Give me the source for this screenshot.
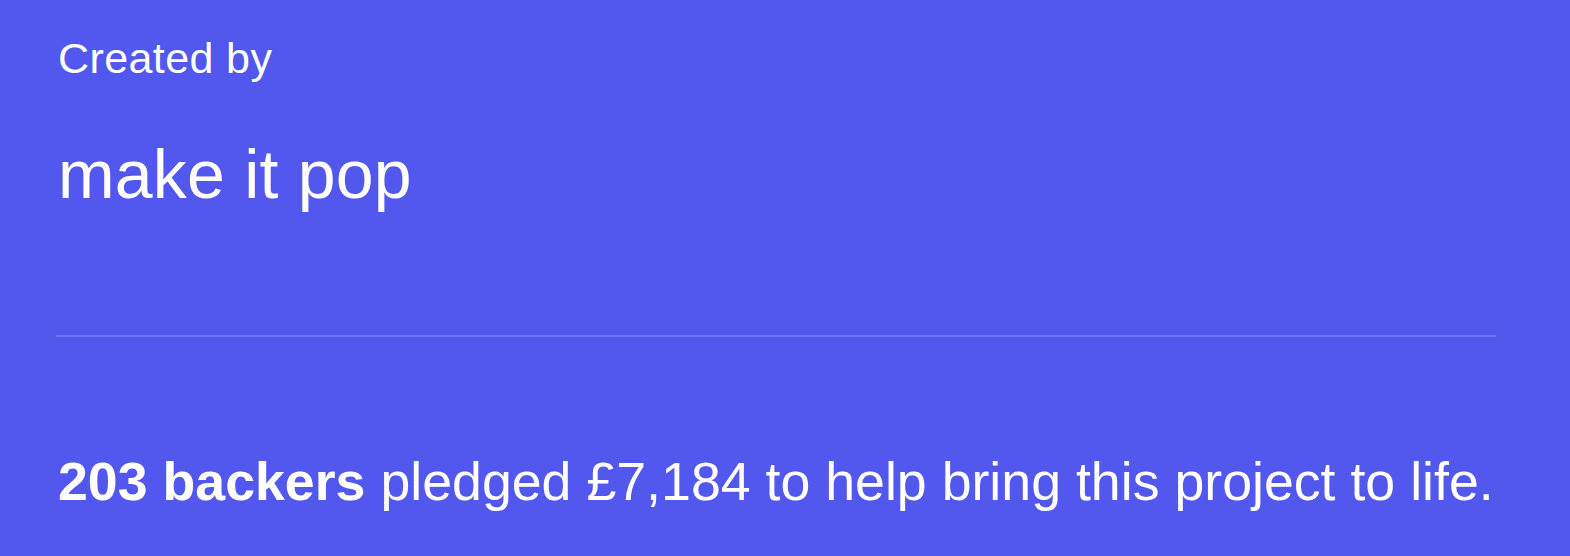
import React from "react";

const font = { fontFamily: '"Liberation Sans", Arial, sans-serif' };

export default function App() {
  return (
    <div
      className="h-[556px] w-[1570px] overflow-hidden bg-[#5258ed] pl-[56px] pt-[37px] text-white"
      style={font}
    >
      {/* creator */}
      <p className="ml-[2px] text-[43px] leading-[43px] tracking-[0.4px]">Created by</p>
      <p className="ml-[2px] mt-[60px] text-[68px] leading-[68px] tracking-[0.2px]">make it pop</p>

      {/* divider */}
      <div className="mt-[127px] h-[2px] w-[1440px] bg-[#7075f1]" />

      {/* stats */}
      <p className="ml-[2px] mt-[118px] text-[53.7px] leading-[53px]">
        <span className="font-bold">203 backers</span> pledged £7,184 to help
        bring this project to life.
      </p>
    </div>
  );
}
